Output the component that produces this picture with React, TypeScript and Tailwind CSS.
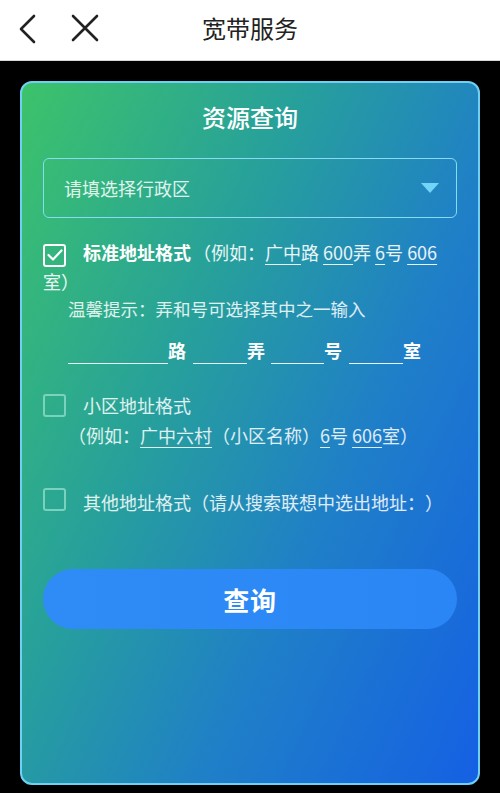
import React from 'react'

const font = { fontFamily: '"Noto Sans CJK SC", "Noto Sans", sans-serif' }

function Check({ checked }: { checked?: boolean }) {
  return (
    <span
      className={
        'inline-flex w-[23px] h-[23px] rounded-[3px] border-2 items-center justify-center align-middle ' +
        (checked ? 'border-white' : 'border-[#8fdcc8]/80')
      }
    >
      {checked && (
        <svg width="16" height="12" viewBox="0 0 16 12" fill="none">
          <path d="M1.5 6l4.5 4.5L14.5 1.5" stroke="white" strokeWidth="2.2" strokeLinecap="round" strokeLinejoin="round" />
        </svg>
      )}
    </span>
  )
}

function Blank({ w }: { w: string }) {
  return <span className={`inline-block ${w} border-b-[1.5px] border-white/90 h-[22px]`} />
}

export default function App() {
  return (
    <div className="w-[500px] h-[793px] bg-black overflow-hidden [text-spacing-trim:space-all]" style={font}>
      <div className="h-[61px] bg-white border-b border-[#d8d8d8] flex items-center relative pb-[4px]">
        <svg className="absolute left-[17px] top-[14px]" width="20" height="30" viewBox="0 0 20 30" fill="none">
          <path d="M17 2L4 15l13 13" stroke="#222" strokeWidth="2.6" strokeLinecap="round" strokeLinejoin="round" />
        </svg>
        <svg className="absolute left-[70px] top-[14px]" width="30" height="28" viewBox="0 0 30 28" fill="none">
          <path d="M3 2l24 24M27 2L3 26" stroke="#222" strokeWidth="2.6" strokeLinecap="round" />
        </svg>
        <div className="w-full text-center text-[24px] text-[#222] leading-none">宽带服务</div>
      </div>

      <div className="px-[20px] pt-[20px]">
        <div className="h-[704px] rounded-[12px] border-2 border-[#6fd0f4] bg-[linear-gradient(115deg,#3cc36a_0%,#27a19a_35%,#1f7fc8_65%,#1560e4_100%)] px-[21px] pt-[18px] text-white">
          <div className="text-center text-[24px] leading-[32px] font-medium">资源查询</div>

          <div className="mt-[25px] h-[60px] rounded-[6px] border border-[#86dbf5] flex items-center justify-between pl-[20px] pr-[16px]">
            <span className="text-[18px] text-white/85">请填选择行政区</span>
            <svg width="20" height="12" viewBox="0 0 20 12">
              <path d="M1 1h18l-9 10z" fill="#72d4f6" />
            </svg>
          </div>

          <p className="mt-[20px] text-[18px] leading-[29px] text-white/90">
            <Check checked />
            <span className="ml-[17px] font-bold text-white">标准地址格式</span>
            <span className="ml-[2px]">（例如：<span className="underline underline-offset-4">广中</span>路 <span className="underline underline-offset-4">600</span>弄 <span className="underline underline-offset-4">6</span>号 <span className="underline underline-offset-4">606</span>室）</span>
          </p>

          <p className="mt-[1px] pl-[25px] text-[17.5px] leading-[24px] text-white/85">温馨提示：弄和号可选择其中之一输入</p>

          <div className="mt-[15px] pl-[25px] flex items-end h-[28px] text-[18px] font-bold text-white">
            <Blank w="w-[100px]" />
            <span>路</span>
            <Blank w="w-[54px] ml-[7px]" />
            <span>弄</span>
            <Blank w="w-[53px] ml-[6px]" />
            <span>号</span>
            <Blank w="w-[54px] ml-[7px]" />
            <span>室</span>
          </div>

          <div className="mt-[26px] text-[18px] leading-[30px] text-white/85">
            <div className="flex items-center">
              <Check />
              <span className="ml-[17px]">小区地址格式</span>
            </div>
            <div className="pl-[25px]">
              （例如：<span className="underline underline-offset-4">广中六村</span>（小区名称）<span className="underline underline-offset-4">6</span>号 <span className="underline underline-offset-4">606</span>室）
            </div>
          </div>

          <div className="mt-[35px] flex items-center h-[29px] text-[18px] text-white/85">
            <Check />
            <span className="ml-[17px] mt-[6px]">其他地址格式（请从搜索联想中选出地址：）</span>
          </div>

          <button className="mt-[55px] w-full h-[60px] rounded-full bg-[linear-gradient(90deg,#2f8cf6,#2a86f4)] text-[26px] font-bold text-white tracking-wide">
            查询
          </button>
        </div>
      </div>
    </div>
  )
}
